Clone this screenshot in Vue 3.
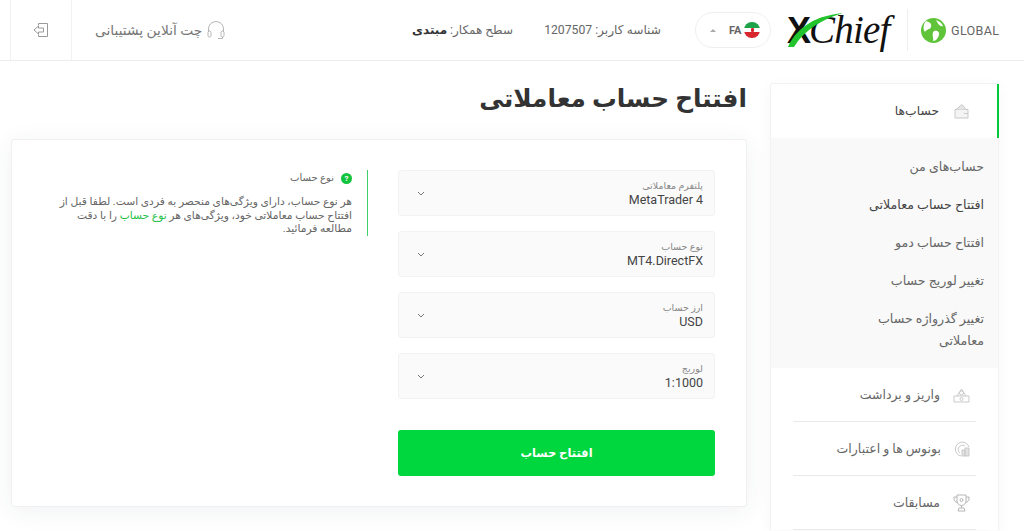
<script setup>
const fields = [
  { label: "پلتفرم معاملاتی", value: "MetaTrader 4" },
  { label: "نوع حساب", value: "MT4.DirectFX" },
  { label: "ارز حساب", value: "USD" },
  { label: "لوریج", value: "1:1000" },
];

const subLinks = [
  "حساب‌های من",
  "افتتاح حساب معاملاتی",
  "افتتاح حساب دمو",
  "تغییر لوریج حساب",
  "تغییر گذرواژه حساب معاملاتی",
];
</script>

<template>
  <div class="page">
    <header class="topbar">
      <div class="logout">
        <svg width="16" height="16" viewBox="0 0 16 16" fill="none" stroke="#9a9a9a" stroke-width="1">
          <path d="M5.5 3.5V1.5H14.5V14.5H5.5V12.5" />
          <path d="M1 8L5.5 4V6H10.5V10H5.5V12Z" />
        </svg>
      </div>
      <div class="support">
        <span>چت آنلاین پشتیبانی</span>
        <svg width="18" height="20" viewBox="0 0 18 20" fill="none" stroke="#b5b5b5" stroke-width="1">
          <path d="M1.5 12V9a7.5 7.5 0 0 1 15 0v3" />
          <rect x="1" y="11" width="3" height="6" rx="1.5" />
          <rect x="14" y="11" width="3" height="6" rx="1.5" />
          <path d="M15.5 17v1.5H11" />
        </svg>
      </div>
      <div class="level">سطح همکار: <b>مبتدی</b></div>
      <div class="user-id">شناسه کاربر: 1207507</div>
      <div class="lang">
        <span class="caret"></span>
        <span class="lang-code">FA</span>
        <span class="flag"><i class="emblem"></i></span>
      </div>
      <div class="logo">
        <span class="logo-x">X</span><span class="logo-rest">Chief</span>
        <svg class="swoosh" width="58" height="36" viewBox="0 0 58 36">
          <path d="M1 35C8 19 24 4 56 1C36 7 18 17 7 35Z" fill="#22c52e" />
        </svg>
      </div>
      <div class="global">
        <svg width="25" height="25" viewBox="0 0 25 25">
          <circle cx="12.5" cy="12.5" r="12.5" fill="#5fc43a" />
          <path d="M5 3C9 4 11 6 10 9C9 12 5 11 4 14C2 12 2 6 5 3ZM13 13C16 12 19 14 18 17C17 20 15 23 12 23C13 20 10 16 13 13ZM15 2C18 3 21 5 22 8C19 9 17 6 15 2Z" fill="#fff" />
        </svg>
        <span>GLOBAL</span>
      </div>
    </header>

    <main class="layout">
      <section class="content">
        <h1>افتتاح حساب معاملاتی</h1>
        <div class="card">
          <div class="info">
            <div class="info-head">
              <span class="help">?</span>
              <span>نوع حساب</span>
            </div>
            <p>
              هر نوع حساب، دارای ویژگی‌های منحصر به فردی است. لطفا قبل از افتتاح حساب معاملاتی خود، ویژگی‌های هر
              <a>نوع حساب</a>
              را با دقت مطالعه فرمائید.
            </p>
          </div>
          <form class="form" @submit.prevent>
            <div v-for="field in fields" :key="field.label" class="field">
              <svg width="8" height="5" viewBox="0 0 8 5" fill="none" stroke="#777" stroke-width="1">
                <path d="M1 1l3 3 3-3" />
              </svg>
              <div class="field-text">
                <label>{{ field.label }}</label>
                <div class="field-value">{{ field.value }}</div>
              </div>
            </div>
            <button class="submit" type="submit">افتتاح حساب</button>
          </form>
        </div>
      </section>

      <aside class="sidebar">
        <div class="side-active">
          <svg width="15" height="16" viewBox="0 0 15 16" fill="none" stroke="#c9c9c9" stroke-width="1">
            <path d="M1 6.5H14V15H1Z" fill="#f4f4f4" />
            <path d="M2 6.5L8 1.5L12 6.5" fill="#e6e6e6" />
            <path d="M10 10.5H14" />
          </svg>
          <span>حساب‌ها</span>
        </div>
        <ul class="sub-links">
          <li v-for="(link, i) in subLinks" :key="link" :class="{ current: i === 1 }">{{ link }}</li>
        </ul>
        <div class="side-item">
          <svg width="17" height="16" viewBox="0 0 17 16" fill="none" stroke="#c9c9c9" stroke-width="1">
            <path d="M1 9H16V15H1Z" />
            <path d="M4 9L8.5 2L13 9" />
            <circle cx="8.5" cy="12" r="1.5" />
            <circle cx="8.5" cy="6" r="2" />
          </svg>
          <span>واریز و برداشت</span>
        </div>
        <div class="side-item">
          <svg width="16" height="17" viewBox="0 0 16 17" fill="none" stroke="#c9c9c9" stroke-width="1">
            <path d="M7 16A7 7 0 1 1 15 7" />
            <path d="M6 13A4 4 0 1 1 11 6" />
            <path d="M8 10H11V16H8ZM11 8H15V16H11Z" fill="#e2e2e2" />
          </svg>
          <span>بونوس ها و اعتبارات</span>
        </div>
        <div class="side-item">
          <svg width="17" height="18" viewBox="0 0 17 18" fill="none" stroke="#b5b5b5" stroke-width="1">
            <path d="M4 1H13V7A4.5 4.5 0 0 1 4 7Z" />
            <path d="M4 3H1V5C1 7 2.5 8 4.5 8.5M13 3H16V5C16 7 14.5 8 12.5 8.5" />
            <circle cx="8.5" cy="6" r="1.5" />
            <path d="M8.5 11.5V14M5 17L6 14H11L12 17Z" />
          </svg>
          <span>مسابقات</span>
        </div>
      </aside>
    </main>
  </div>
</template>

<style>
html,
body {
  margin: 0;
  background: #fff;
  overflow: hidden;
}
</style>

<style scoped>
.page {
  height: 531px;
  overflow: hidden;
  background: #fff;
  color: #555;
  font-family: Roboto, "DejaVu Sans", sans-serif;
}

.topbar {
  height: 60px;
  display: flex;
  align-items: center;
  padding: 0 24px 0 10px;
  border-bottom: 1px solid #ededed;
  box-sizing: content-box;
}

.logout {
  width: 60px;
  height: 60px;
  display: flex;
  align-items: center;
  justify-content: center;
  border-left: 1px solid #f2f2f2;
  border-right: 1px solid #f2f2f2;
}

.support {
  margin-left: 23px;
  width: 130px;
  display: flex;
  align-items: center;
  justify-content: space-between;
  font-size: 13.8px;
  color: #777;
}

.level {
  margin-left: 188px;
  width: 100px;
  text-align: right;
  direction: rtl;
  font-size: 12px;
  color: #666;
  white-space: nowrap;
}

.level b {
  color: #333;
}

.user-id {
  margin-left: 31px;
  width: 117px;
  direction: rtl;
  font-size: 12.2px;
  color: #666;
  white-space: nowrap;
}

.lang {
  margin-left: 34px;
  width: 76px;
  height: 36px;
  box-sizing: border-box;
  border: 1px solid #efefef;
  border-radius: 18px;
  display: flex;
  align-items: center;
  padding: 0 10px 0 14px;
}

.caret {
  width: 0;
  height: 0;
  border-left: 3px solid transparent;
  border-right: 3px solid transparent;
  border-bottom: 3px solid #aaa;
  margin-right: 13px;
}

.lang-code {
  font-size: 11px;
  font-weight: 700;
  color: #666;
  margin-right: 3px;
}

.flag {
  width: 16px;
  height: 16px;
  border-radius: 50%;
  background: linear-gradient(#1fa34a 0 36%, #fff 36% 64%, #d8262e 64%);
  display: flex;
  align-items: center;
  justify-content: center;
}

.emblem {
  width: 3px;
  height: 4px;
  background: #d8262e;
  border-radius: 1px;
}

.logo {
  position: relative;
  margin-left: 15px;
  width: 121px;
  height: 42px;
  display: flex;
  align-items: baseline;
  border-right: 1px solid #eee;
  color: #111;
  font-family: "Liberation Serif", serif;
  line-height: 42px;
}

.swoosh {
  position: absolute;
  left: 1px;
  top: 3px;
}

.logo-x {
  font-family: "Liberation Sans", sans-serif;
  font-weight: 700;
  font-size: 36px;
  letter-spacing: -2px;
  margin-left: 1px;
}

.logo-rest {
  font-style: italic;
  font-size: 39px;
  letter-spacing: -0.8px;
}

.global {
  margin-left: 13px;
  display: flex;
  align-items: center;
  gap: 5px;
  font-size: 12.6px;
  letter-spacing: 0.3px;
  color: #666;
}

.layout {
  display: flex;
  align-items: flex-start;
  padding: 22px 25px 0 11px;
  gap: 23px;
}

.content {
  width: 736px;
  flex: none;
}

h1 {
  margin: 0 0 22px;
  height: 34px;
  line-height: 32px;
  direction: rtl;
  font-size: 24.7px;
  font-weight: 700;
  color: #333;
}

.card {
  height: 368px;
  box-sizing: border-box;
  padding: 30px 31px 0 15px;
  display: flex;
  justify-content: flex-end;
  gap: 30px;
  background: #fff;
  border: 1px solid #f0f0f0;
  border-radius: 3px;
  box-shadow: 0 4px 24px rgba(40, 50, 90, 0.07);
}

.info {
  width: 314px;
  height: 66px;
  padding-right: 15px;
  box-sizing: border-box;
  border-right: 1px solid #3fcf6a;
  direction: rtl;
}

.info-head {
  display: flex;
  align-items: center;
  gap: 7px;
  padding-top: 2px;
  font-size: 10px;
  color: #666;
  line-height: 12px;
  margin-bottom: 11px;
}

.help {
  width: 11px;
  height: 11px;
  border-radius: 50%;
  background: #12c33c;
  color: #fff;
  font-size: 8px;
  font-weight: 700;
  text-align: center;
  line-height: 11px;
}

.info p {
  margin: 0;
  font-size: 10.7px;
  line-height: 13.5px;
  color: #666;
}

.info a {
  color: #1fc14a;
}

.form {
  width: 317px;
  flex: none;
  display: flex;
  flex-direction: column;
  gap: 15px;
}

.field {
  height: 46px;
  box-sizing: border-box;
  padding: 0 11px 0 18px;
  background: #fafafa;
  border: 1px solid #f2f2f2;
  border-radius: 3px;
  display: flex;
  align-items: center;
  justify-content: space-between;
}

.field-text {
  text-align: right;
}

.field-text label {
  display: block;
  direction: rtl;
  font-size: 9.5px;
  line-height: 13px;
  color: #888;
}

.field-value {
  font-size: 12.5px;
  line-height: 15px;
  color: #444;
}

.submit {
  margin-top: 16px;
  height: 46px;
  border: 0;
  border-radius: 3px;
  background: #00d63d;
  color: #fff;
  font-family: inherit;
  font-size: 11.5px;
  font-weight: 700;
}

.sidebar {
  width: 229px;
  flex: none;
  background: #fff;
  border: 1px solid #f2f2f2;
  border-bottom: 0;
  border-radius: 3px 0 0 0;
  box-sizing: border-box;
  direction: rtl;
  box-shadow: 0 4px 16px rgba(40, 50, 90, 0.04);
}

.side-active {
  height: 54px;
  display: flex;
  align-items: center;
  gap: 15px;
  padding-right: 28px;
  font-size: 12.3px;
  color: #444;
  border-right: 2px solid #00c93a;
  margin-right: -1px;
}

.sub-links {
  list-style: none;
  margin: 0;
  padding: 10px 14px 8px;
  background: #f9f9f9;
}

.sub-links li {
  max-width: 150px;
  font-size: 12.6px;
  line-height: 22px;
  padding: 8px 0;
  color: #666;
}

.sub-links li.current {
  color: #444;
}

.side-item {
  height: 54px;
  box-sizing: border-box;
  margin: 0 22px;
  padding-right: 6px;
  display: flex;
  align-items: center;
  gap: 13px;
  font-size: 12.5px;
  color: #666;
  border-bottom: 1px solid #e9e9e9;
}
</style>
